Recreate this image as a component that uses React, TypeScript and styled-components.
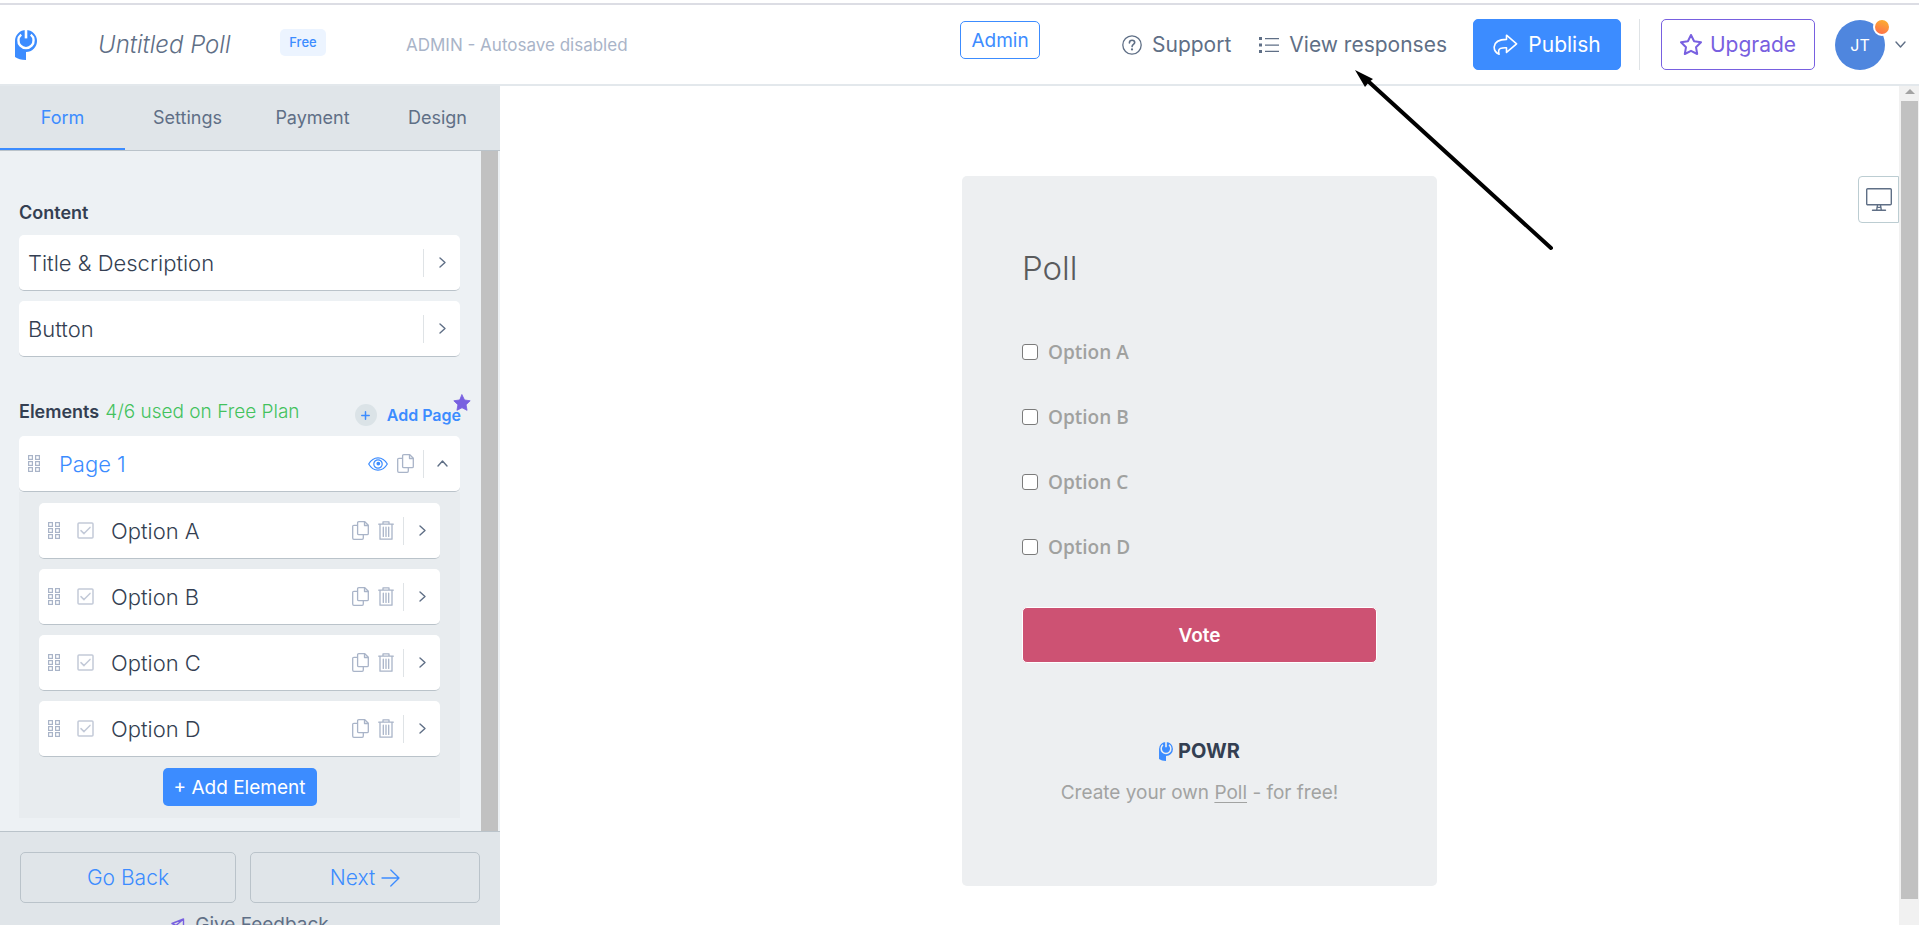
import React from 'react';
import styled, { createGlobalStyle, css } from 'styled-components';

const color = {
  blue: '#3c8cff',
  purple: '#7860e0',
  slate: '#5f6f86',
  ink: '#343f52',
  mute: '#a9b4c8',
  line: '#dfe3e6',
  edge: '#bac3ca',
  bar: '#e0e5e9',
  panel: '#edf1f4',
};

const GlobalStyle = createGlobalStyle`
  *, *::before, *::after { box-sizing: border-box; }
  body {
    margin: 0;
    background: #fff;
    color: ${color.ink};
    font-family: Inter, "Liberation Sans", sans-serif;
    overflow: hidden;
  }
  button, input { font: inherit; color: inherit; }
  button { padding: 0; border: 0; background: none; cursor: pointer; }
  h1, h2, p { margin: 0; font-weight: inherit; }
  svg { display: block; flex: none; }
`;

const Page = styled.div`
  position: relative;
  display: flex;
  flex-direction: column;
  height: 100vh;
`;

/* ---------- header ---------- */

const TopBar = styled.header`
  display: flex;
  flex: none;
  align-items: center;
  justify-content: space-between;
  height: 83px;
  margin-top: 3px;
  padding: 0 13px 0 15px;
  border-top: 2px solid #dcdde4;
  border-bottom: 2px solid #e3e8ec;
`;

const HeaderGroup = styled.div`
  display: flex;
  align-items: center;
`;

const TitleInput = styled.input`
  width: 160px;
  margin: 0 22px 0 61px;
  padding: 0;
  border: 0;
  outline: 0;
  background: none;
  color: ${color.slate};
  font-size: 24px;
  font-style: italic;
  font-weight: 300;
`;

const PlanBadge = styled.span`
  width: 46px;
  margin: 0 80px 4px 0;
  border-radius: 5px;
  background: #ecf4ff;
  color: ${color.blue};
  font-size: 13px;
  font-weight: 500;
  line-height: 27px;
  text-align: center;
`;

const SaveState = styled.span`
  color: ${color.mute};
  font-size: 17px;
  line-height: 24px;
`;

const AdminButton = styled.button`
  width: 80px;
  height: 38px;
  margin: 0 82px 9px 0;
  border: 1px solid ${color.blue};
  border-radius: 5px;
  color: ${color.blue};
  font-size: 19px;
`;

const NavLink = styled.a`
  display: flex;
  align-items: center;
  gap: 10px;
  margin-right: 28px;
  color: ${color.slate};
  font-size: 21px;
  text-decoration: none;
  &:nth-of-type(2) { margin-right: 26px; }
`;

const HeaderButton = styled.button<{ $solid?: boolean }>`
  display: flex;
  align-items: center;
  justify-content: center;
  gap: ${p => (p.$solid ? 10 : 8)}px;
  width: ${p => (p.$solid ? 148 : 154)}px;
  height: 51px;
  border: 1px solid ${p => (p.$solid ? color.blue : color.purple)};
  border-radius: 5px;
  background: ${p => (p.$solid ? color.blue : '#fff')};
  color: ${p => (p.$solid ? '#fff' : color.purple)};
  font-size: 21px;
`;

const HeaderRule = styled.span`
  width: 1px;
  height: 51px;
  margin: 0 21px 0 18px;
  background: ${color.line};
`;

const AccountButton = styled.button`
  position: relative;
  display: flex;
  align-items: center;
  gap: 10px;
  margin-left: 20px;
  color: ${color.slate};
`;

const Avatar = styled.span`
  width: 50px;
  border-radius: 50%;
  background: #4f86de;
  color: #fff;
  font-size: 16px;
  line-height: 50px;
`;

const Dot = styled.span`
  position: absolute;
  top: -2px;
  left: 38px;
  width: 18px;
  height: 18px;
  border: 2px solid #fff;
  border-radius: 50%;
  background: linear-gradient(200deg, #fbb52d, #ff6a4d);
`;

/* ---------- sidebar ---------- */

const Body = styled.div`
  display: flex;
  flex: 1;
  min-height: 0;
`;

const Sidebar = styled.aside`
  display: flex;
  flex: none;
  flex-direction: column;
  width: 500px;
  background: ${color.panel};
`;

const Tabs = styled.nav`
  display: grid;
  flex: none;
  grid-template-columns: repeat(4, 1fr);
  height: 65px;
  border-bottom: 1px solid ${color.edge};
  background: ${color.bar};
`;

const Tab = styled.a<{ $active?: boolean }>`
  box-shadow: inset 0 -2px ${p => (p.$active ? color.blue : 'transparent')};
  color: ${p => (p.$active ? color.blue : color.slate)};
  font-size: 18px;
  line-height: 64px;
  text-align: center;
  text-decoration: none;
`;

const SidebarScroll = styled.div`
  display: flex;
  flex: 1;
  min-height: 0;
  overflow: hidden;
`;

const SidebarContent = styled.div`
  flex: 1;
  padding: 50px 21px 0 19px;
`;

const SidebarThumb = styled.div`
  width: 17px;
  margin-right: 2px;
  background: #c1c1c1;
`;

const SectionTitle = styled.h2`
  margin-bottom: 10px;
  font-size: 18px;
  font-weight: 600;
  line-height: 24px;
`;

const ElementsHead = styled.div`
  display: flex;
  justify-content: space-between;
  margin: 43px 0 12px;
  height: 24px;
`;

const ElementsTitle = styled.h2`
  font-size: 18px;
  font-weight: 600;
  line-height: 24px;
`;

const Usage = styled.span`
  margin-left: 6px;
  color: #43c25d;
  font-size: 19px;
  font-weight: 300;
`;

const AddPage = styled.button`
  position: relative;
  display: flex;
  align-items: center;
  gap: 10px;
  height: 30px;
  margin-right: -1px;
  color: ${color.blue};
  font-size: 16px;
  font-weight: 600;
`;

const PlusDisc = styled.span`
  display: grid;
  place-items: center;
  width: 22px;
  height: 22px;
  border-radius: 50%;
  background: #dbe3e7;
`;

const ProStar = styled.span`
  position: absolute;
  top: -6px;
  right: -10px;
`;

const CardStack = styled.div<{ $nested?: boolean }>`
  display: flex;
  flex-direction: column;
  gap: 10px;
  ${p => p.$nested && css`
    padding: 11px 20px 12px;
    background: #e8ecef;
  `}
`;

const Card = styled.div`
  display: flex;
  align-items: center;
  gap: 9px;
  height: 56px;
  padding-left: 9px;
  border-bottom: 1px solid ${color.edge};
  border-radius: 5px;
  background: #fff;
  color: ${color.mute};
`;

const CardLabel = styled.button<{ $tone?: string; $indent?: number }>`
  flex: 1;
  padding-left: ${p => p.$indent ?? 0}px;
  color: ${p => p.$tone ?? color.ink};
  font-size: 22px;
  font-weight: 300;
  text-align: left;
`;

const FieldIcon = styled.span`
  margin-left: 7px;
`;

const Expand = styled.button`
  display: grid;
  place-items: center;
  width: 37px;
  height: 28px;
  border-left: 1px solid ${color.line};
  color: ${color.slate};
`;

const AddElement = styled.button`
  align-self: center;
  width: 154px;
  height: 38px;
  margin-top: 1px;
  border-radius: 5px;
  background: ${color.blue};
  color: #fff;
  font-size: 19px;
`;

const SidebarFooter = styled.footer`
  flex: none;
  height: 94px;
  overflow: hidden;
  padding: 20px;
  border-top: 1px solid ${color.edge};
  background: ${color.bar};
`;

const FooterButtons = styled.div`
  display: grid;
  grid-template-columns: 216fr 230fr;
  gap: 14px;
`;

const FooterButton = styled.button`
  display: flex;
  align-items: center;
  justify-content: center;
  gap: 6px;
  height: 51px;
  border: 1px solid ${color.edge};
  border-radius: 5px;
  color: ${color.blue};
  font-size: 21px;
  font-weight: 300;
`;

const Feedback = styled.a`
  display: flex;
  align-items: center;
  justify-content: center;
  gap: 10px;
  margin-top: 10px;
  color: ${color.slate};
  font-size: 19px;
  line-height: 24px;
  text-decoration: none;
`;

/* ---------- preview ---------- */

const Preview = styled.main`
  position: relative;
  flex: 1;
  padding: 90px 24px 0;
`;

const PollCard = styled.form`
  display: flex;
  flex-direction: column;
  max-width: 475px;
  margin: 0 auto;
  padding: 70px 60px 80px;
  border-radius: 5px;
  background: #edeff1;
`;

const PollTitle = styled.h1`
  color: #5a5b5d;
  font-size: 33px;
  font-weight: 300;
  line-height: 44px;
`;

const PollOptions = styled.div`
  display: grid;
  gap: 37px;
  margin-top: 48px;
`;

const PollOption = styled.label`
  display: flex;
  align-items: center;
  gap: 10px;
  color: #a0a19f;
  font: 600 19px/28px "Open Sans", "Noto Sans", sans-serif;
`;

const PollCheck = styled.input`
  appearance: none;
  width: 16px;
  height: 16px;
  margin: 0;
  border: 1px solid #7b7b7b;
  border-radius: 3px;
  background: #fff;
  &:checked { background: ${color.blue}; }
`;

const VoteButton = styled.button`
  flex: none;
  height: 56px;
  margin-top: 46px;
  border: 1px solid #fff;
  border-radius: 5px;
  background: #cd5273;
  color: #fff;
  font-size: 19px;
  font-weight: 600;
`;

const Brand = styled.div`
  display: flex;
  align-items: center;
  justify-content: center;
  gap: 5px;
  margin-top: 75px;
  color: ${color.ink};
  font-size: 20px;
  font-weight: 700;
  line-height: 26px;
`;

const BrandLine = styled.p`
  margin-top: 16px;
  color: #a2a3a2;
  font-size: 19px;
  line-height: 26px;
  text-align: center;
  white-space: nowrap;
  a { color: inherit; text-underline-offset: 3px; }
`;

const DeviceButton = styled.button`
  position: absolute;
  top: 90px;
  right: 0;
  display: grid;
  place-items: center;
  width: 41px;
  height: 47px;
  border: 1px solid #bccdd2;
  border-radius: 4px 0 0 4px;
  color: ${color.slate};
`;

const ScrollTrack = styled.div`
  display: flex;
  flex: none;
  flex-direction: column;
  align-items: center;
  width: 20px;
  padding: 3px 1px 26px 2px;
  background: #f1f1f1;
  color: #a3a3a3;
`;

const ScrollThumb = styled.div`
  flex: 1;
  width: 17px;
  margin-top: 7px;
  background: #c1c1c1;
`;

const Pointer = styled.svg`
  position: absolute;
  top: 68px;
  right: 364px;
  pointer-events: none;
`;

/* ---------- icons ---------- */

const line = { fill: 'none', stroke: 'currentColor', strokeLinecap: 'round', strokeLinejoin: 'round' } as const;

const Logo = ({ width, height, ring }: { width: number; height: number; ring: string }) => (
  <svg width={width} height={height} viewBox="0 0 22 30" aria-hidden="true">
    <path d="M0 11a11 11 0 1 1 11 11v8C6 30 3 29 0 27z" fill={color.blue} />
    <path d="M6.2 4.6a7.6 7.6 0 1 0 9.6 0" fill="none" stroke={ring} strokeWidth="2.4" />
    <path d="M9.7 0h2.6v8.4H9.7z" fill={ring} />
  </svg>
);

const HelpIcon = () => (
  <svg width="20" height="20" viewBox="0 0 20 20" {...line} strokeWidth="1.3" aria-hidden="true">
    <circle cx="10" cy="10" r="9.2" />
    <path d="M7.4 7.9c0-1.6 1.1-2.6 2.7-2.6s2.6 1 2.6 2.3c0 1.9-2.6 1.9-2.6 4" strokeWidth="1.6" />
    <path d="M10 14.3v.1" strokeWidth="2.2" />
  </svg>
);

const ListIcon = () => (
  <svg width="20" height="16" viewBox="0 0 20 16" fill="currentColor" aria-hidden="true">
    <path d="M0 0h3v3H0zM0 6.5h3v3H0zM0 13h3v3H0zM6 1h14v1.3H6zM6 7.4h14v1.3H6zM6 13.8h14v1.3H6z" />
  </svg>
);

const ShareIcon = () => (
  <svg width="25" height="21" viewBox="0 0 25 21" {...line} strokeWidth="1.6" aria-hidden="true">
    <path d="M13.5 5.4V1.2L23.6 9.8 13.5 18.4v-4.6c-5-.2-7.2.2-7.7 2.4-.3 1.3-.1 2.6.3 4C2.6 18.6 1 16 1.2 12.8 1.8 7.4 6.5 5.4 13.5 5.4z" />
  </svg>
);

const starPath = 'M12 2l3.1 6.3 6.9 1-5 4.9 1.2 6.8L12 17.8 5.8 21 7 14.2 2 9.3l6.9-1z';

const StarIcon = ({ size, solid }: { size: number; solid?: boolean }) => (
  <svg width={size} height={size} viewBox="1 1 22 22" {...line} fill={solid ? color.purple : 'none'} stroke={color.purple} strokeWidth={solid ? 1 : 2} aria-hidden="true">
    <path d={starPath} />
  </svg>
);

const chevrons = { down: 'M1 3l4.5 5L10 3', up: 'M1 8l4.5-5L10 8', right: 'M3 1l5 4.5L3 10' };
const Chevron = ({ to }: { to: keyof typeof chevrons }) => (
  <svg width="11" height="11" viewBox="0 0 11 11" {...line} strokeWidth="1.4" aria-hidden="true">
    <path d={chevrons[to]} />
  </svg>
);

const DragIcon = () => (
  <svg width="13" height="17" viewBox="0 0 13 17" fill="none" stroke="currentColor" strokeWidth="1.2" aria-hidden="true">
    {[0.6, 6.6, 12.6].map(y => [0.6, 7.6].map(x => <rect key={`${x}-${y}`} x={x} y={y} width="3.8" height="3.8" />))}
  </svg>
);

const EyeIcon = () => (
  <svg width="20" height="14" viewBox="0 0 20 14" {...line} stroke={color.blue} strokeWidth="1.2" aria-hidden="true">
    <path d="M.7 7C3 3 6.3.8 10 .8S17 3 19.3 7C17 11 13.7 13.2 10 13.2S3 11 .7 7z" />
    <circle cx="10" cy="7" r="4.2" />
    <circle cx="10.3" cy="6.6" r="1.3" fill={color.blue} />
  </svg>
);

const CopyIcon = () => (
  <svg width="17" height="19" viewBox="0 0 17 19" {...line} strokeWidth="1.3" aria-hidden="true">
    <path d="M6.8.7h6l3.5 3.5v8.3c0 .8-.4 1.2-1.2 1.2H6.8c-.8 0-1.2-.4-1.2-1.2V1.9c0-.8.4-1.2 1.2-1.2z" />
    <path d="M12.5.9v3.6h3.7M5.4 4.3H1.9c-.8 0-1.2.4-1.2 1.2v11.6c0 .8.4 1.2 1.2 1.2h8.2c.8 0 1.2-.4 1.2-1.2V14" />
  </svg>
);

const TrashIcon = () => (
  <svg width="16" height="19" viewBox="0 0 16 19" {...line} strokeWidth="1.3" aria-hidden="true">
    <path d="M.7 3.2h14.6M5 3V.9h6V3M2 3.4v14.8h12V3.4M5.3 6.2v9.2M8 6.2v9.2M10.7 6.2v9.2" />
  </svg>
);

const CheckFieldIcon = () => (
  <svg width="17" height="17" viewBox="0 0 17 17" {...line} stroke="#c3cad8" strokeWidth="1.5" aria-hidden="true">
    <rect x="1" y="1" width="15" height="15" rx="1" />
    <path d="M4 8.6l3 3 6-6.2" />
  </svg>
);

const ArrowIcon = () => (
  <svg width="19" height="18" viewBox="0 0 19 18" {...line} strokeWidth="1.3" aria-hidden="true">
    <path d="M1 9h17M9.8 1l8.2 8-8.2 8" />
  </svg>
);

const PlusIcon = () => (
  <svg width="9" height="9" viewBox="0 0 9 9" {...line} strokeWidth="1.5" aria-hidden="true">
    <path d="M4.5.8v7.4M.8 4.5h7.4" />
  </svg>
);

const PlaneIcon = () => (
  <svg width="14" height="14" viewBox="0 0 14 14" {...line} stroke={color.purple} strokeWidth="1.4" aria-hidden="true">
    <path d="M12.5 1L1 5.5l4 2 7.5-6.5v11.5L7.5 9" />
  </svg>
);

const MonitorIcon = () => (
  <svg width="26" height="23" viewBox="0 0 26 23" {...line} strokeWidth="1.4" aria-hidden="true">
    <rect x=".7" y=".7" width="24.6" height="16" rx="1" />
    <path d="M11.5 17l-.8 5M14.5 17l.8 5M6.5 22.2h13M11 19.4h4" />
  </svg>
);

/* ---------- page ---------- */

const options = ['Option A', 'Option B', 'Option C', 'Option D'];

export default function App() {
  return (
    <Page>
      <GlobalStyle />
      <TopBar>
        <HeaderGroup>
          <Logo width={22} height={30} ring="#fff" />
          <TitleInput aria-label="Poll name" defaultValue="Untitled Poll" />
          <PlanBadge>Free</PlanBadge>
          <SaveState>ADMIN - Autosave disabled</SaveState>
        </HeaderGroup>
        <HeaderGroup>
          <AdminButton type="button">Admin</AdminButton>
          <NavLink href="#support"><HelpIcon />Support</NavLink>
          <NavLink href="#responses"><ListIcon />View responses</NavLink>
          <HeaderButton type="button" $solid><ShareIcon />Publish</HeaderButton>
          <HeaderRule />
          <HeaderButton type="button"><StarIcon size={22} />Upgrade</HeaderButton>
          <AccountButton type="button">
            <Avatar>JT</Avatar>
            <Dot />
            <Chevron to="down" />
          </AccountButton>
        </HeaderGroup>
      </TopBar>

      <Body>
        <Sidebar>
          <Tabs>
            <Tab href="#form" $active>Form</Tab>
            <Tab href="#settings">Settings</Tab>
            <Tab href="#payment">Payment</Tab>
            <Tab href="#design">Design</Tab>
          </Tabs>
          <SidebarScroll>
            <SidebarContent>
              <SectionTitle>Content</SectionTitle>
              <CardStack>
                {['Title & Description', 'Button'].map(name => (
                  <Card key={name}>
                    <CardLabel type="button">{name}</CardLabel>
                    <Expand type="button" aria-label={`Open ${name}`}><Chevron to="right" /></Expand>
                  </Card>
                ))}
              </CardStack>

              <ElementsHead>
                <ElementsTitle>Elements<Usage>4/6 used on Free Plan</Usage></ElementsTitle>
                <AddPage type="button">
                  <PlusDisc><PlusIcon /></PlusDisc>
                  Add Page
                  <ProStar><StarIcon size={18} solid /></ProStar>
                </AddPage>
              </ElementsHead>

              <Card>
                <DragIcon />
                <CardLabel type="button" $tone={color.blue} $indent={9}>Page 1</CardLabel>
                <button type="button" aria-label="Preview page"><EyeIcon /></button>
                <button type="button" aria-label="Copy page"><CopyIcon /></button>
                <Expand type="button" aria-label="Collapse page"><Chevron to="up" /></Expand>
              </Card>
              <CardStack $nested>
                {options.map(name => (
                  <Card key={name}>
                    <DragIcon />
                    <FieldIcon><CheckFieldIcon /></FieldIcon>
                    <CardLabel type="button" $indent={8}>{name}</CardLabel>
                    <button type="button" aria-label={`Copy ${name}`}><CopyIcon /></button>
                    <button type="button" aria-label={`Delete ${name}`}><TrashIcon /></button>
                    <Expand type="button" aria-label={`Open ${name}`}><Chevron to="right" /></Expand>
                  </Card>
                ))}
                <AddElement type="button">+ Add Element</AddElement>
              </CardStack>
            </SidebarContent>
            <SidebarThumb />
          </SidebarScroll>
          <SidebarFooter>
            <FooterButtons>
              <FooterButton type="button">Go Back</FooterButton>
              <FooterButton type="button">Next<ArrowIcon /></FooterButton>
            </FooterButtons>
            <Feedback href="#feedback"><PlaneIcon />Give Feedback</Feedback>
          </SidebarFooter>
        </Sidebar>

        <Preview>
          <PollCard onSubmit={e => e.preventDefault()}>
            <PollTitle>Poll</PollTitle>
            <PollOptions>
              {options.map(name => (
                <PollOption key={name}>
                  <PollCheck type="checkbox" name={name} />
                  {name}
                </PollOption>
              ))}
            </PollOptions>
            <VoteButton type="submit">Vote</VoteButton>
            <Brand><Logo width={14} height={19} ring="#edeff1" />POWR</Brand>
            <BrandLine>Create your own <a href="#poll">Poll</a> - for free!</BrandLine>
          </PollCard>
          <DeviceButton type="button" aria-label="Desktop view"><MonitorIcon /></DeviceButton>
        </Preview>

        <ScrollTrack aria-hidden="true">
          <svg width="10" height="5" viewBox="0 0 10 5"><path d="M5 0l5 5H0z" fill="currentColor" /></svg>
          <ScrollThumb />
        </ScrollTrack>
      </Body>

      <Pointer width="200" height="184" viewBox="0 0 200 184" aria-hidden="true">
        <path d="M14 14L196 180" stroke="#000" strokeWidth="4" strokeLinecap="round" />
        <path d="M0 2l18 9-4 3-4 5z" />
      </Pointer>
    </Page>
  );
}
